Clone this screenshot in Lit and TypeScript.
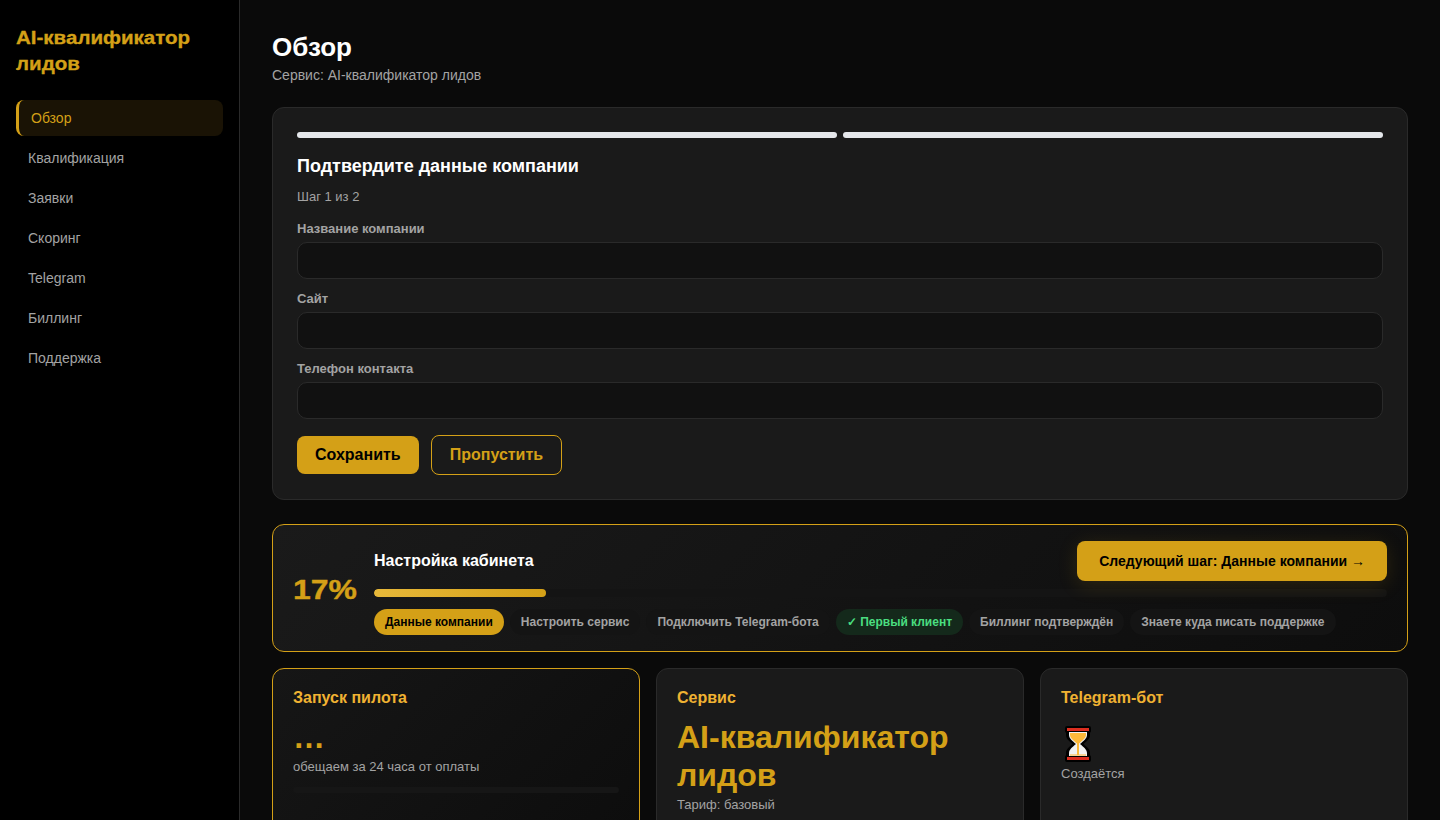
import { LitElement, html, css } from "lit";
import { customElement } from "lit/decorators.js";

const NAV = ["Обзор", "Квалификация", "Заявки", "Скоринг", "Telegram", "Биллинг", "Поддержка"];
const FIELDS = ["Название компании", "Сайт", "Телефон контакта"];
const CHIPS = [
  { label: "Данные компании", kind: "current" },
  { label: "Настроить сервис", kind: "" },
  { label: "Подключить Telegram-бота", kind: "" },
  { label: "✓ Первый клиент", kind: "done" },
  { label: "Биллинг подтверждён", kind: "" },
  { label: "Знаете куда писать поддержке", kind: "" },
];

const hourglass = html`<svg class="hourglass" width="26" height="36" viewBox="0 0 26 36" aria-hidden="true">
  <path
    d="M2 0h22a2 2 0 0 1 2 2v3a2 2 0 0 1-1 1.7V9c0 4-3.500 6.500-6.500 9 3 2.500 6.500 5 6.500 9v2.300a2 2 0 0 1 1 1.700v3a2 2 0 0 1-2 2H2a2 2 0 0 1-2-2v-3a2 2 0 0 1 1-1.700V27c0-4 3.500-6.500 6.500-9C4.500 15.500 1 13 1 9V6.700A2 2 0 0 1 0 5V2a2 2 0 0 1 2-2z"
    fill="#000"
  />
  <path d="M4 6h18v3c0 3.500-3.500 6-7 9 3.500 3 7 5.500 7 9v3H4v-3c0-3.500 3.500-6 7-9-3.500-3-7-5.500-7-9z" fill="#f1f1f1" />
  <path d="M5 7h16v2c0 3-3.500 5.500-7 8.500v11h3.500c2 0 3.500 0 3.500 0v1H5v-1h7v-11C8.500 14.500 5 12 5 9z" fill="#fdb93a" />
  <rect x="2" y="2" width="22" height="3" fill="#dd2e1f" />
  <rect x="2" y="31" width="22" height="3" fill="#dd2e1f" />
</svg>`;

@customElement("app-root")
export class AppRoot extends LitElement {
  static styles = css`
    :host {
      display: flex;
      height: 100vh;
      overflow: hidden;
      background: #0a0a0a;
      color: #fff;
      font-family: "Liberation Sans", Arial, sans-serif;
    }

    .sidebar {
      width: 240px;
      flex: none;
      box-sizing: border-box;
      padding: 25px 16px 24px;
      background: #000;
      border-right: 1px solid #2a2a2a;
    }

    .brand {
      margin: 0 0 23px;
      font-size: 18px;
      line-height: 26px;
      font-weight: 800;
      color: #d4a017;
      -webkit-text-stroke: 0.3px #d4a017;
      transform: scaleX(1.14);
      transform-origin: left;
    }

    .nav {
      display: flex;
      flex-direction: column;
      gap: 4px;
    }

    .nav-item {
      height: 36px;
      padding: 0 12px;
      display: flex;
      align-items: center;
      font-size: 14px;
      color: #a3a3a3;
      border-radius: 8px;
    }

    .nav-item.active {
      color: #d4a017;
      background: #1a1305;
      border-left: 3px solid #d4a017;
    }

    .main {
      flex: 1;
      min-width: 0;
      padding: 32px;
    }

    h1 {
      margin: 0;
      font-size: 26px;
      line-height: 30px;
      font-weight: 700;
    }

    .subtitle {
      margin: 5px 0 23px;
      font-size: 14px;
      line-height: 17px;
      color: #a3a3a3;
    }

    .panel {
      background: #1a1a1a;
      border: 1px solid #2a2a2a;
      border-radius: 12px;
    }

    .form {
      padding: 24px;
      margin-bottom: 24px;
    }

    .steps {
      display: flex;
      gap: 6px;
      margin-bottom: 16px;
    }

    .steps span {
      flex: 1;
      height: 6px;
      border-radius: 3px;
      background: #e5e7eb;
    }

    .form h2 {
      margin: 0;
      font-size: 18px;
      line-height: 24px;
      font-weight: 700;
    }

    .step-note {
      margin: 10px 0 15px;
      font-size: 13px;
      line-height: 18px;
      color: #a3a3a3;
    }

    .field {
      margin-bottom: 12px;
    }

    .field label {
      display: block;
      margin-bottom: 5px;
      font-size: 13px;
      line-height: 16px;
      font-weight: 700;
      color: #a3a3a3;
    }

    .input {
      height: 37px;
      box-sizing: border-box;
      background: #111;
      border: 1px solid #2a2a2a;
      border-radius: 10px;
    }

    .actions {
      display: flex;
      align-items: center;
      gap: 12px;
      margin-top: 16px;
    }

    .btn {
      box-sizing: border-box;
      padding: 0 18px;
      display: flex;
      align-items: center;
      font-size: 16px;
      font-weight: 700;
      border-radius: 8px;
    }

    .btn.primary {
      height: 38px;
      background: #d4a017;
      color: #000;
    }

    .btn.ghost {
      height: 40px;
      color: #d4a017;
      border: 1px solid #d4a017;
    }

    .setup {
      display: flex;
      align-items: center;
      gap: 16px;
      box-sizing: border-box;
      padding: 16px 20px;
      margin-bottom: 16px;
      background: linear-gradient(135deg, #1a1a1a, #0d0d0d);
      border: 1px solid #d4a017;
      border-radius: 12px;
    }

    .percent {
      width: 65px;
      flex: none;
      margin-top: 4px;
      font-size: 28px;
      font-weight: 800;
      color: #d4a017;
      -webkit-text-stroke: 0.4px #d4a017;
      transform: scaleX(1.14);
      transform-origin: left;
    }

    .setup-body {
      flex: 1;
      min-width: 0;
    }

    .setup-top {
      display: flex;
      align-items: center;
      justify-content: space-between;
      height: 40px;
    }

    .setup-title {
      font-size: 16px;
      font-weight: 700;
    }

    .next {
      height: 40px;
      padding: 0 22px;
      display: flex;
      align-items: center;
      font-size: 14px;
      font-weight: 700;
      color: #000;
      background: #d4a017;
      border-radius: 8px;
      box-shadow: 0 4px 20px rgba(212, 160, 23, 0.15);
    }

    .track {
      height: 8px;
      margin-top: 8px;
      border-radius: 4px;
      background: #141414;
      overflow: hidden;
    }

    .fill {
      height: 100%;
      border-radius: 4px;
      background: linear-gradient(90deg, #e8b93a, #d4a017);
    }

    .chips {
      display: flex;
      gap: 6px;
      margin-top: 12px;
    }

    .chip {
      height: 26px;
      padding: 0 11px;
      display: flex;
      align-items: center;
      font-size: 12px;
      font-weight: 700;
      color: #a3a3a3;
      background: #141414;
      border-radius: 13px;
    }

    .chip.current {
      background: #d4a017;
      color: #000;
    }

    .chip.done {
      background: #14291b;
      color: #4ade80;
    }

    .cards {
      display: grid;
      grid-template-columns: repeat(3, 1fr);
      gap: 16px;
    }

    .card {
      min-height: 220px;
      box-sizing: border-box;
      padding: 20px;
    }

    .card.highlight {
      background: linear-gradient(135deg, #161616, #0c0c0c);
      border-color: #d4a017;
    }

    .card h3 {
      margin: 0 0 11px;
      font-size: 16px;
      line-height: 18px;
      font-weight: 700;
      color: #f0b232;
    }

    .value {
      font-size: 32px;
      line-height: 38px;
      font-weight: 700;
      color: #d4a017;
    }

    .note {
      margin-top: 3px;
      font-size: 13px;
      line-height: 15px;
      color: #a3a3a3;
    }

    .mini-track {
      height: 6px;
      margin-top: 13px;
      border-radius: 3px;
      background: #161616;
    }

    .hourglass {
      display: block;
      margin: 19px 0 4px 4px;
    }
  `;

  render() {
    return html`
      <aside class="sidebar">
        <h2 class="brand">AI-квалификатор лидов</h2>
        <nav class="nav">
          ${NAV.map((n, i) => html`<div class="nav-item ${i === 0 ? "active" : ""}">${n}</div>`)}
        </nav>
      </aside>
      <main class="main">
        <h1>Обзор</h1>
        <p class="subtitle">Сервис: AI-квалификатор лидов</p>

        <section class="panel form">
          <div class="steps"><span></span><span></span></div>
          <h2>Подтвердите данные компании</h2>
          <p class="step-note">Шаг 1 из 2</p>
          ${FIELDS.map(
            (f) => html`<div class="field">
              <label>${f}</label>
              <div class="input"></div>
            </div>`
          )}
          <div class="actions">
            <div class="btn primary">Сохранить</div>
            <div class="btn ghost">Пропустить</div>
          </div>
        </section>

        <section class="setup">
          <div class="percent">17%</div>
          <div class="setup-body">
            <div class="setup-top">
              <div class="setup-title">Настройка кабинета</div>
              <div class="next">Следующий шаг: Данные компании →</div>
            </div>
            <div class="track"><div class="fill" style="width: 17%"></div></div>
            <div class="chips">
              ${CHIPS.map((c) => html`<div class="chip ${c.kind}">${c.label}</div>`)}
            </div>
          </div>
        </section>

        <section class="cards">
          <div class="panel card highlight">
            <h3>Запуск пилота</h3>
            <div class="value">…</div>
            <div class="note">обещаем за 24 часа от оплаты</div>
            <div class="mini-track"></div>
          </div>
          <div class="panel card">
            <h3>Сервис</h3>
            <div class="value">AI-квалификатор лидов</div>
            <div class="note">Тариф: базовый</div>
          </div>
          <div class="panel card">
            <h3>Telegram-бот</h3>
            ${hourglass}
            <div class="note">Создаётся</div>
          </div>
        </section>
      </main>
    `;
  }
}
